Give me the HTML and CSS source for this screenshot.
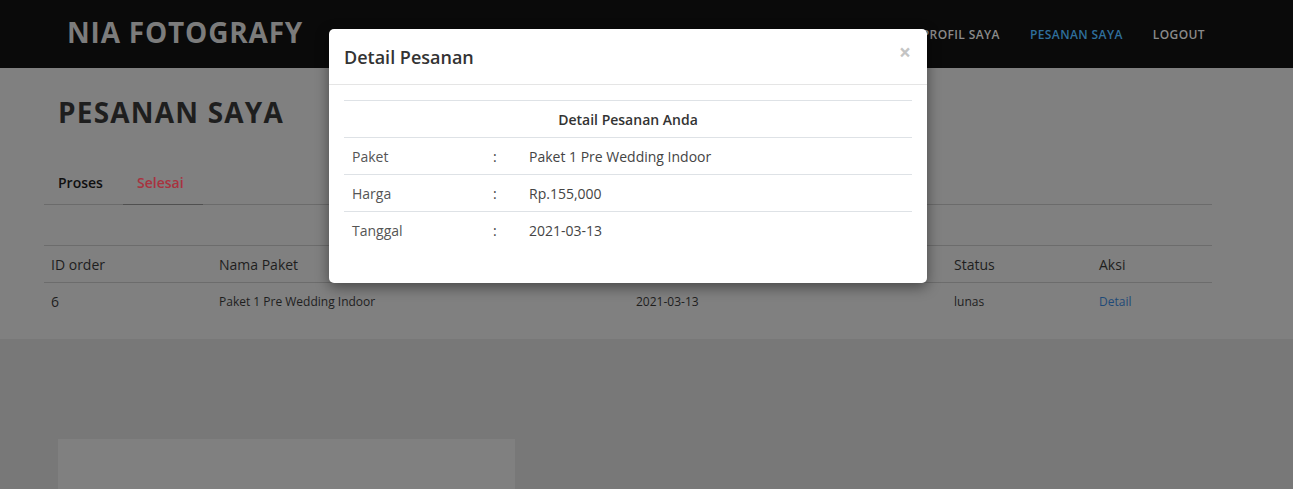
FILE: index.html
```html
<!DOCTYPE html>
<html lang="id">
<head>
<meta charset="utf-8">
<title>Pesanan Saya - Nia Fotografy</title>
<link rel="stylesheet" href="styles.css">
</head>
<body>
<header class="nav">
  <div class="logo">NIA FOTOGRAFY</div>
  <ul class="menu">
    <li>HOME</li>
    <li>PROFIL KAMI</li>
    <li>PAKET</li>
    <li>PETUNJUK PEMESANAN</li>
    <li>PROFIL SAYA</li>
    <li class="active">PESANAN SAYA</li>
    <li>LOGOUT</li>
  </ul>
</header>

<section class="orders">
  <h1 class="title">PESANAN SAYA</h1>
  <div class="tabs">
    <div class="tab">Proses</div>
    <div class="tab tab-active">Selesai</div>
  </div>
  <table class="list">
    <colgroup>
      <col class="c1"><col class="c2"><col class="c3"><col class="c4"><col>
    </colgroup>
    <thead>
      <tr><th>ID order</th><th>Nama Paket</th><th>Tanggal</th><th>Status</th><th>Aksi</th></tr>
    </thead>
    <tbody>
      <tr><td class="id">6</td><td>Paket 1 Pre Wedding Indoor</td><td>2021-03-13</td><td>lunas</td><td class="link">Detail</td></tr>
    </tbody>
  </table>
</section>

<section class="lower">
  <div class="card"></div>
</section>

<div class="modal">
  <div class="modal-head">
    <h2>Detail Pesanan</h2>
    <span class="close">&times;</span>
  </div>
  <div class="modal-body">
    <table class="detail">
      <colgroup><col class="d1"><col class="d2"><col></colgroup>
      <tr><th colspan="3">Detail Pesanan Anda</th></tr>
      <tr><td class="lbl">Paket</td><td class="sep">:</td><td>Paket 1 Pre Wedding Indoor</td></tr>
      <tr><td class="lbl">Harga</td><td class="sep">:</td><td>Rp.155,000</td></tr>
      <tr><td class="lbl">Tanggal</td><td class="sep">:</td><td>2021-03-13</td></tr>
    </table>
  </div>
</div>
</body>
</html>
```

FILE: styles.css
```css
* { box-sizing: border-box; }
html, body { margin: 0; padding: 0; }
body {
  font-family: "Open Sans", "Noto Sans", sans-serif;
  background: #787878;
  height: 489px;
  overflow: hidden;
}

.nav {
  height: 68px;
  background: #0a0a0a;
  display: flex;
  align-items: center;
  padding: 0 88px 0 67px;
}
.logo {
  color: #7c7c7c;
  font-size: 28px;
  font-weight: 700;
  letter-spacing: 0.8px;
  margin-top: -4px;
}
.menu {
  list-style: none;
  margin: 0 0 0 auto;
  padding: 0;
  display: flex;
  gap: 30px;
  color: #8a8a8a;
  font-size: 12px;
  font-weight: 600;
  letter-spacing: 0.4px;
}
.menu .active { color: #2f6f9c; }

.orders {
  background: #808080;
  padding: 20px 81px 19px 44px;
}
.title {
  margin: 0 0 33px 14px;
  font-size: 28px;
  font-weight: 700;
  letter-spacing: 1.2px;
  color: #1e1e1e;
  line-height: 48px;
}
.tabs {
  display: flex;
  border-bottom: 1px solid #6b6b6b;
}
.tab {
  font-size: 14px;
  font-weight: 600;
  color: #101010;
  padding: 4px 15px 12px 14px;
  width: 79px;
}
.tab-active {
  color: #a8333f;
  width: 80px;
  border-bottom: 1px solid #505050;
  margin-bottom: -1px;
}

.list {
  width: 100%;
  border-collapse: collapse;
  margin-top: 40px;
  color: #1e1e1e;
}
.list .c1 { width: 168px; }
.list .c2 { width: 417px; }
.list .c3 { width: 318px; }
.list .c4 { width: 145px; }
.list th, .list td {
  text-align: left;
  padding: 0 7px;
  height: 37px;
  border-top: 1px solid #6c6c6c;
  font-weight: 400;
}
.list th { font-size: 14px; }
.list td { font-size: 12px; }
.list td.id { font-size: 14px; }
.list td.link { color: #1f4a78; }

.lower {
  height: 150px;
  padding: 100px 0 0 58px;
}
.card {
  width: 457px;
  height: 60px;
  background: #808080;
}

.modal {
  position: absolute;
  left: 329px;
  top: 29px;
  width: 598px;
  height: 254px;
  background: #fff;
  border-radius: 5px;
  box-shadow: 0 4px 14px rgba(0, 0, 0, 0.45);
}
.modal-head {
  height: 56px;
  border-bottom: 1px solid #e5e5e5;
  display: flex;
  align-items: center;
  justify-content: space-between;
  padding: 0 16px 0 15px;
}
.modal-head h2 {
  margin: 0;
  font-size: 18px;
  font-weight: 600;
  color: #333;
}
.close {
  font-size: 21px;
  font-weight: 700;
  color: #c4c4c4;
  margin-top: -8px;
  line-height: 1;
}
.modal-body { padding: 15px; }
.detail {
  width: 100%;
  border-collapse: collapse;
  color: #444;
}
.detail .d1 { width: 141px; }
.detail .d2 { width: 36px; }
.detail th, .detail td {
  border-top: 1px solid #dee2e6;
  height: 37px;
  padding: 0 8px;
  text-align: left;
  font-size: 14px;
  font-weight: 400;
}
.detail th {
  text-align: center;
  font-weight: 600;
  color: #333;
}
.detail td.sep { padding: 0 0 0 8px; }
.detail td.lbl { color: #555; }
```
